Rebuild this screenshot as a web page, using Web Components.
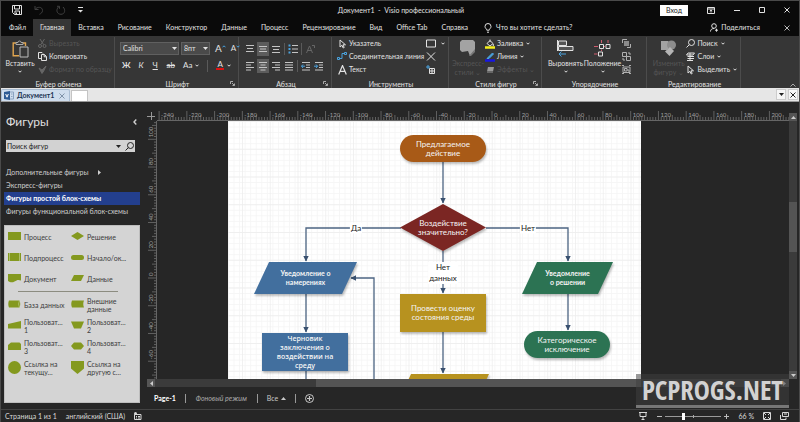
<!DOCTYPE html>
<html lang="ru">
<head>
<meta charset="utf-8">
<title>Документ1 - Visio профессиональный</title>
<style>
  html, body { margin: 0; height: 100%; background: #262626; }
  body {
    --text: #e2e2e2; --dim: #555; --line: #4c4c4c; --ribbon: #363636; --dark: #262626;
    font: 7px/9px Lato, "Open Sans", "Noto Sans", sans-serif;
    color: var(--text);
  }
</style>
</head>
<body>
<visio-window></visio-window>

<script>
/* Icons: [width, height, markup]; strokes use currentColor unless a tint is given. */
const ICONS = {
  save: [10, 10, '<path d="M.5.5h9v9h-7l-2-2zM2.500.5v3.500h5V.5M3 9.500V6h4.500v3.500M4.500 7.500v2"/>'],
  undo: [10, 10, '<path d="M1 1v3.500h3.500M1.200 4.300C3 1.500 8.500 1.500 8.500 5.500c0 2-1.500 3-3 3.800"/>'],
  redo: [10, 10, '<path d="M2.500 2C-.5 5 1 9.300 5 9.300S9.800 4.500 7 2M1 1.300h2.500v2.500"/>'],
  more: [5, 6, '<path d="M0 .5h5"/><path d="M0 3h5L2.500 5.500z" fill="currentColor" stroke="none"/>'],
  chev: [4, 3, '<path d="M.5.7L2 2.200 3.500.7"/>'],
  chevup: [6, 4, '<path d="M.5 3.500L3 1l2.500 2.500"/>'],
  caretup: [4, 3, '<path d="M.5 2.300L2 .8l1.500 1.500"/>'],
  tri: [5, 3, '<path d="M0 0h5L2.500 3z" fill="currentColor" stroke="none"/>'],
  triup: [5, 3, '<path d="M0 3h5L2.500 0z" fill="currentColor" stroke="none"/>'],
  triright: [3, 5, '<path d="M0 0v5l3-2.500z" fill="currentColor" stroke="none"/>'],
  trileft: [3, 5, '<path d="M3 0v5L0 2.500z" fill="currentColor" stroke="none"/>'],
  left: [4, 6, '<path d="M3.300.6L1 3l2.300 2.400" stroke-width="1.400"/>'],
  display: [8, 7, '<path d="M.5.5h7v6h-7zM.5 2h7M4 5.500v-2.500M2.800 4L4 2.900 5.200 4"/>'],
  min: [6, 6, '<path d="M0 3.500h6"/>'],
  max: [6, 6, '<path d="M.5.5h5v5h-5z"/>'],
  close: [6, 6, '<path d="M.5.5l5 5M5.500.5l-5 5"/>'],
  bulb: [8, 10, '<path d="M2.800 7.200C2.800 5.700 1 5.400 1 3.500a3 3 0 0 1 6 0c0 1.900-1.800 2.200-1.800 3.700zM3 9.200h2"/>'],
  person: [8, 9, '<circle cx="4" cy="3" r="2.300"/><path d="M.5 8.500C.5 6.500 2 5.500 4 5.500M5 7.200h3M6.500 5.700v3"/>'],
  paste: [17, 18, '<path d="M4 3H1.200v12.800H7" stroke="#e0a54f" stroke-width="1.400"/><path d="M11 3h2.500v3" stroke="#e0a54f" stroke-width="1.400"/><path d="M4 4.500V2.500h2a1.500 1.500 0 0 1 3 0h2v2z" stroke="#aaa"/><path d="M8 7h8v10H8z" stroke="#bbb"/>'],
  cut: [9, 9, '<path d="M2 0l3.500 5.500M6.500 0L3 5.500"/><circle cx="2" cy="7" r="1.500"/><circle cx="6.500" cy="7" r="1.500"/>'],
  copy: [9, 9, '<path d="M3 6.500H.5v-6H4l1 1M3.500 2.500h3l2 2v4h-5zM6.200 2.500v2.300h2"/>'],
  brush: [9, 9, '<path d="M1 3l3 2 4-4-2 4.500L4 8.500z" fill="currentColor"/>'],
  vtop: [10, 10, '<path d="M1 1.500h8M2 4.500h6M1 7.500h8"/>'],
  vmid: [10, 10, '<path d="M1 2.500h8M2 5h6M1 7.500h8"/>'],
  vbot: [10, 10, '<path d="M1 2.500h8M2 5.500h6M1 8.500h8"/>'],
  left4: [10, 10, '<path d="M1 1.500h8M1 4h5M1 6.500h8M1 9h5"/>'],
  center4: [10, 10, '<path d="M1 1.500h8M2.500 4h5M1 6.500h8M2.500 9h5"/>'],
  right4: [10, 10, '<path d="M1 1.500h8M4 4h5M1 6.500h8M4 9h5"/>'],
  just4: [10, 10, '<path d="M1 1.500h8M1 4h8M1 6.500h8M1 9h8"/>'],
  bullets: [10, 10, '<path d="M4 1.500h6M4 5h6M4 8.500h6"/><path d="M.5 1.500h2M.5 5h2M.5 8.500h2" stroke="#4aa3df" stroke-width="2"/>'],
  outdent: [10, 10, '<path d="M1 1.500h8M5 4h4M5 6.500h4M1 9h8"/><path d="M4 5.200H.5M2 3.500L.5 5.200 2 7" stroke="#4aa3df"/>'],
  indent: [10, 10, '<path d="M1 1.500h8M5 4h4M5 6.500h4M1 9h8"/><path d="M0 5.200h3.500M2 3.500l1.500 1.700L2 7" stroke="#4aa3df"/>'],
  rotA: [9, 10, '<path d="M.5 9L3.500 2l3 7M1.500 6.500h4M6 1.500h2.500v2.500"/>'],
  pointer: [9, 10, '<path d="M2 1v7l2-1.700 1.200 2.700 1-.5L5 5.800h2.500z"/>'],
  connector: [10, 9, '<path d="M2 6.500h3v-5h3" stroke="#4aa3df"/><path d="M.5 5.500h2v2h-2zM7.500.5h2v2h-2z" stroke="#4aa3df"/>'],
  textA: [9, 10, '<path d="M.7 9.500L4.500.5l3.800 9M2 6.300h5" stroke-width="1.200"/>'],
  rect: [10, 9, '<path d="M.5 1h9v7h-9z"/>'],
  cross: [10, 9, '<path d="M1 .5l8 8M9 .5l-8 8"/>'],
  node: [10, 10, '<path d="M3.500 3.500h5v5h-5zM3.500 6h5M6 3.500v5"/><path d="M0 2h4M2 0v4" stroke="#4aa3df"/>'],
  express: [16, 17, '<path d="M2 0h11l2 2v8l-5 6-2-5-6 1-2-2V2z" fill="#a3a3a3" stroke="none"/><path d="M9 16l6-7v3l-4 4z" fill="#777" stroke="none"/>'],
  fill: [10, 10, '<path d="M2 4.500L5 1.500l3 3-3 2.500zM5 3V.5M8.300 5v2"/><path d="M0 8.500h10" stroke="#f3ef1c" stroke-width="2.500"/>'],
  line: [10, 10, '<path d="M2 6.500L7.500 1l1 1L4 6.500z" fill="#4aa3df" stroke="#4aa3df"/><path d="M0 8.500h10" stroke="#1717e0" stroke-width="2.500"/>'],
  effect: [9, 8, '<path d="M2 1h6L7 5.500H1z" fill="#999" stroke="none"/><path d="M1 5.500h6v1.500H1z" fill="#666" stroke="none"/>'],
  align: [17, 17, '<path d="M.5 0v11"/><path d="M1.500 1h8v4.500h-8zM1.500 6.500h14.500v4h-14.500z" fill="#555"/><path d="M9 14H2M4.500 11.500L2 14l2.500 2.500" stroke="#4aa3df"/>'],
  position: [17, 17, '<path d="M4.500 12h4v4h-4zM5.500 4.500h4v4h-4zM12 4.500h4v4h-4z"/><path d="M7.500 0v3M0 6.500h4M7.500 9.500v1.500M10 6.500h1.500M0 14h3.500M14 0v3" stroke="#cf5b6d"/>'],
  front: [9, 9, '<path d="M.5 4V.5H5M8.500 5v3.500H5"/><path d="M2 2h5v5H2z" fill="#8c8c8c" stroke="none"/>'],
  back: [9, 9, '<path d="M.5.5h4v4h-4zM4.500 4.500h4v4h-4zM6 1h2v2M1 6v2h2"/>'],
  group: [9, 9, '<path d="M1 2v5.500h7V2zM2.500 3.500h2.500v2.500H2.500zM5 5h2v2"/><path d="M0 .5h2M7 .5h2M0 8.500h2M7 8.500h2"/>'],
  change: [16, 17, '<path d="M0 1h7l4 4-5 5H0z" fill="#a3a3a3" stroke="none"/><circle cx="10.500" cy="5" r="4.500" fill="#8d8d8d" stroke="none"/><path d="M9 7l4 4-4.500 5L4 11.500z" fill="#b5b5b5" stroke="none"/>'],
  find: [9, 9, '<circle cx="5.500" cy="3.500" r="3"/><path d="M3.300 5.700L.5 8.500"/>'],
  layers: [9, 9, '<path d="M2 1h6.500L7 3H.5zM1.500 4.500h6.500M1.500 6.500h6.500M1 8.500h6M4 1v7"/>'],
  launch: [5, 5, '<path d="M.5 3V.5H3M2 2l2.300 2.300M4.500 2.500v2h-2"/>'],
  visio: [10, 9, '<path d="M5 1h4.500v7H5zM7 3h1.500M7 5.500h1.500" stroke="#8ba3c0"/><path d="M0 1l6-1v9L0 8z" fill="#2c5a94" stroke="none"/><path d="M1.700 3L3 6.200 4.300 3" stroke="#fff"/>'],
  add: [9, 9, '<circle cx="4.500" cy="4.500" r="4"/><path d="M4.500 2v5M2 4.500h5" stroke-width="1.200"/>'],
  macro: [8, 8, '<path d="M.5 2.500h6.500v5H.5zM2 4.500h1M4 4.500h2M2 6h1M4 6h2"/><circle cx="1.500" cy="1.500" r="1.500" fill="currentColor" stroke="none"/>'],
  present: [8, 8, '<path d="M0 .5h8M1 .5v4h6v-4M4 4.500v3M2.500 7.500h3"/>'],
  fit: [8, 8, '<path d="M.5.5h7v7h-7zM1 1l2 2M7 1L5 3M1 7l2-2M7 7L5 5"/>'],
  windows: [9, 8, '<path d="M2.500.5h6v4h-6zM.5 3v4.500h5.500v-2M4 2h3"/>'],
  plus: [5, 5, '<path d="M0 2.500h5M2.500 0v5"/>'],
  minus: [5, 5, '<path d="M0 2.500h5"/>'],
  target: [8, 8, '<path d="M0 4.500h8M4.500 0v8"/>']
};

/* Green stencil shapes, drawn in a 13 x 13 box. */
const STENCILS = {
  process: '<path d="M0 2h13v8H0z"/>',
  decision: '<path d="M0 6l6.500-4L13 6l-6.500 4z"/>',
  sub: '<path d="M0 2h13v8H0z"/><path d="M1.500 2v8M11.500 2v8" stroke="#c9d8a0" stroke-width=".6"/>',
  terminator: '<rect y="4" width="13" height="5" rx="2.500"/>',
  document: '<path d="M0 2h13v6.500c-3-1-4-.5-6.500 1S2 10.300 0 9z"/>',
  data: '<path d="M3 3h10l-3 6H0z"/>',
  database: '<path d="M1 2.500h10.500q1.500 3.500 0 7H1q-1.500-3.500 0-7z"/><path d="M11.500 2.500q-1.800 3.500 0 7" fill="none" stroke="#c9d8a0" stroke-width=".6"/>',
  external: '<path d="M1 2.500h12q-1.500 3.500 0 7H1q-1.500-3.500 0-7z"/>',
  c1: '<path d="M0 5l13-3v7.500H0z"/>',
  c2: '<path d="M0 2.500h13l-3 7H3z"/>',
  c3: '<path d="M3 2.500h8.500L13 4v6H0V5z"/>',
  c4: '<path d="M3 2.500h7L13 6l-3 3.500H3L0 6z"/>',
  ref: '<circle cx="6.500" cy="6.500" r="6.500"/>',
  offpage: '<path d="M0 0h13v7.500L6.500 13 0 7.500z"/>'
};

const SHARED = `<style>
  * { box-sizing: border-box; }
  button, input, select { font: inherit; color: inherit; background: none; border: 0; padding: 0; margin: 0; border-radius: 0; }
  button, a { display: flex; align-items: center; white-space: nowrap; color: inherit; text-decoration: none; }
</style>`;

class View extends HTMLElement {
  connectedCallback() {
    if (this.shadowRoot) return;
    this.attachShadow({ mode: 'open' }).innerHTML = SHARED + this.view();
    this.ready?.();
  }
  at(name, fallback = '') { return this.getAttribute(name) ?? fallback; }
}

class UiIcon extends View {
  view() {
    const [w, h, body] = ICONS[this.at('name')];
    return `<style>:host { display: block; flex: none; } svg { display: block; }</style>
      <svg width="${w}" height="${h}" viewBox="0 0 ${w} ${h}" fill="none" stroke="currentColor" aria-hidden="true">${body}</svg>`;
  }
}

class TitleBar extends View {
  view() {
    return `<style>
      :host { display: grid; grid-template-columns: 1fr auto 1fr; align-items: center; height: 18px; padding: 0 9px 0 11px; font-size: 7px; }
      .side { display: flex; align-items: center; gap: 12px; }
      .end { justify-content: flex-end; gap: 19px; }
      .off { color: #404040; }
      .login { background: #fff; color: #222; height: 11px; padding: 0 6px; }
      h1 { font: inherit; margin: 0; }
    </style>
    <div class="side">
      <button aria-label="Сохранить"><ui-icon name="save"></ui-icon></button>
      <button class="off" aria-label="Отменить"><ui-icon name="undo"></ui-icon></button>
      <button class="off" aria-label="Повторить"><ui-icon name="redo"></ui-icon></button>
      <button aria-label="Настройка панели"><ui-icon name="more"></ui-icon></button>
    </div>
    <h1>Документ1 &nbsp;- &nbsp;Visio профессиональный</h1>
    <div class="side end">
      <button class="login">Вход</button>
      <button aria-label="Параметры ленты"><ui-icon name="display"></ui-icon></button>
      <button aria-label="Свернуть"><ui-icon name="min"></ui-icon></button>
      <button aria-label="Развернуть"><ui-icon name="max"></ui-icon></button>
      <button aria-label="Закрыть"><ui-icon name="close"></ui-icon></button>
    </div>`;
  }
}

class RibbonTabs extends View {
  view() {
    const tabs = ['Файл', 'Главная', 'Вставка', 'Рисование', 'Конструктор', 'Данные', 'Процесс', 'Рецензирование', 'Вид', 'Office Tab', 'Справка'];
    return `<style>
      :host { display: flex; align-items: stretch; height: 17px; padding: 0 9px 0 1px; }
      nav { display: flex; }
      nav a { padding: 0 7px; }
      .on { background: var(--ribbon); }
      .ask { margin-left: 9px; gap: 4px; }
      .share { margin-left: auto; gap: 3px; }
      .x { margin-left: 24px; color: #bbb; }
    </style>
    <nav>${tabs.map(t => `<a href="#"${t === 'Главная' ? ' class="on" aria-current="page"' : ''}>${t}</a>`).join('')}</nav>
    <button class="ask"><ui-icon name="bulb"></ui-icon>Что вы хотите сделать?</button>
    <button class="share"><ui-icon name="person"></ui-icon>Поделиться</button>
    <button class="x" aria-label="Закрыть ленту"><ui-icon name="close"></ui-icon></button>`;
  }
}

class RibbonGroup extends View {
  view() {
    return `<style>
      :host { display: flex; flex-direction: column; border-right: 1px solid var(--line); padding: 0 3px 0 5px; min-width: 0; }
      .body { display: flex; flex: 1; min-height: 0; }
      footer { display: flex; align-items: center; justify-content: center; height: 10px; position: relative; }
      button { position: absolute; right: 0; top: 2px; color: #aaa; }
    </style>
    <div class="body"><slot></slot></div>
    <footer>${this.at('label')}${this.hasAttribute('launcher') ? `<button aria-label="Параметры: ${this.at('label')}"><ui-icon name="launch"></ui-icon></button>` : ''}</footer>`;
  }
}

class RibbonStack extends View {
  view() {
    return `<style>:host { display: flex; flex-direction: column; align-items: flex-start; }</style><slot></slot>`;
  }
}

/* Small command: icon, caption passed in the slot, optional menu arrow. */
class RibbonButton extends View {
  view() {
    return `<style>
      :host { display: block; }
      button { height: 13px; gap: 2px; }
      .ico { width: 10px; display: flex; justify-content: center; }
      :host([off]) .txt { color: var(--dim); }
      :host([off]) .ico { color: #666; }
      .menu { margin-left: 1px; }
    </style>
    <button${this.hasAttribute('off') ? ' disabled' : ''}${this.hasAttribute('hint') ? ` aria-label="${this.at('hint')}"` : ''}>
      <span class="ico"><ui-icon name="${this.at('icon')}"></ui-icon></span><span class="txt"><slot></slot></span>
      ${this.hasAttribute('menu') ? '<ui-icon class="menu" name="chev"></ui-icon>' : ''}
    </button>`;
  }
}

class BigButton extends View {
  view() {
    return `<style>
      :host { display: block; }
      button { flex-direction: column; padding-top: 3px; text-align: center; width: 100%; }
      ui-icon { height: 19px; }
      .txt { white-space: pre-line; display: block; margin-bottom: 2px; }
      .menu { height: 3px; }
      :host([off]) .txt { color: var(--dim); }
    </style>
    <button${this.hasAttribute('off') ? ' disabled' : ''}>
      <ui-icon name="${this.at('icon')}"></ui-icon><span class="txt"><slot></slot></span>
      ${this.hasAttribute('menu') ? '<ui-icon class="menu" name="chev"></ui-icon>' : ''}
    </button>`;
  }
}

class FontTools extends View {
  view() {
    return `<style>
      :host { display: flex; flex-direction: column; width: 100%; padding-top: 5px; gap: 4px; }
      .row { display: flex; align-items: center; gap: 2px; height: 13px; }
      label { position: relative; display: flex; }
      select { appearance: none; height: 13px; width: 59px; background: #4a4a4a; border: 1px solid #606060; padding: 0 2px; font-size: 7px; }
      .size select { width: 29px; }
      label ui-icon { position: absolute; right: 2px; top: 5px; }
      .grow { font-size: 10px; margin-left: 3px; }
      .grow.sm { font-size: 8px; }
      .grow ui-icon { margin-bottom: 5px; color: #4aa3df; }
      .fmt { gap: 8px; padding-left: 2px; font-size: 8px; }
      .fmt button { gap: 3px; min-width: 6px; }
      .bar { width: 1px; height: 12px; background: #5a5a5a; }
      .color span { border-bottom: 2px solid #d11; line-height: 7px; padding: 0 1px; }
    </style>
    <div class="row">
      <label><select aria-label="Шрифт"><option>Calibri</option></select><ui-icon name="tri"></ui-icon></label>
      <label class="size"><select aria-label="Размер"><option>8пт</option></select><ui-icon name="tri"></ui-icon></label>
      <button class="grow">A<ui-icon name="caretup"></ui-icon></button>
      <button class="grow sm">A<ui-icon name="chev"></ui-icon></button>
    </div>
    <div class="row fmt">
      <button><b>Ж</b></button><button><i>К</i></button><button><u>Ч</u></button><button><s>ab</s></button>
      <button>Aa<ui-icon name="chev"></ui-icon></button><span class="bar"></span>
      <button class="color"><span>А</span><ui-icon name="chev"></ui-icon></button>
    </div>`;
  }
}

class ParagraphTools extends View {
  view() {
    const cell = n => n === '|' ? '<span class="bar"></span>'
      : `<button aria-label="${n}" class="${/vmid|center4/.test(n) ? 'on' : n === 'rotA' ? 'off' : ''}"><ui-icon name="${n}"></ui-icon></button>`;
    return `<style>
      :host { display: flex; flex-direction: column; padding-top: 5px; gap: 3px; color: #c4c4c4; }
      .row { display: flex; align-items: center; gap: 1px; }
      button { height: 14px; width: 12px; justify-content: center; }
      .on { background: #5c5c5c; }
      .off { color: #666; }
      .bar { width: 1px; height: 12px; background: #5a5a5a; margin: 0 1px; }
    </style>
    <div class="row">${['vtop', 'vmid', 'vbot', '|', 'bullets', '|', 'rotA'].map(cell).join('')}</div>
    <div class="row">${['left4', 'center4', 'right4', 'just4', '|', 'outdent', 'indent'].map(cell).join('')}</div>`;
  }
}

class RibbonBar extends View {
  view() {
    return `<style>
      :host { display: grid; grid-template-columns: 114px 124px 93px 117px 93px 105px 94px 1fr; height: 52px; padding: 1px 0; background: var(--ribbon); }
      .gap { margin-left: auto; }
      .wide { width: 37px; }
      .end { display: flex; justify-content: flex-end; align-items: flex-end; padding: 0 3px 2px 0; color: #aaa; }
      .arr { color: #b0b0b0; }
      .first { width: 28px; margin-right: 3px; }
    </style>
    <ribbon-group label="Буфер обмена">
      <big-button class="first" icon="paste" menu>Вставить</big-button>
      <ribbon-stack>
        <ribbon-button icon="cut" off>Вырезать</ribbon-button>
        <ribbon-button icon="copy">Копировать</ribbon-button>
        <ribbon-button icon="brush" off>Формат по образцу</ribbon-button>
      </ribbon-stack>
    </ribbon-group>
    <ribbon-group label="Шрифт" launcher><font-tools></font-tools></ribbon-group>
    <ribbon-group label="Абзац" launcher><paragraph-tools></paragraph-tools></ribbon-group>
    <ribbon-group label="Инструменты">
      <ribbon-stack>
        <ribbon-button icon="pointer">Указатель</ribbon-button>
        <ribbon-button icon="connector">Соединительная линия</ribbon-button>
        <ribbon-button icon="textA">Текст</ribbon-button>
      </ribbon-stack>
      <ribbon-stack class="gap">
        <ribbon-button icon="rect" menu hint="Прямоугольник"></ribbon-button>
        <ribbon-button icon="cross" hint="Точка соединения"></ribbon-button>
        <ribbon-button icon="node" hint="Блок текста"></ribbon-button>
      </ribbon-stack>
    </ribbon-group>
    <ribbon-group label="Стили фигур" launcher>
      <big-button class="first" icon="express" off>Экспресс-
стили ⌄</big-button>
      <ribbon-stack>
        <ribbon-button icon="fill" menu>Заливка</ribbon-button>
        <ribbon-button icon="line" menu>Линия</ribbon-button>
        <ribbon-button icon="effect" off>Эффекты ⌄</ribbon-button>
      </ribbon-stack>
    </ribbon-group>
    <ribbon-group label="Упорядочение">
      <big-button class="wide" icon="align" menu>Выровнять</big-button>
      <big-button class="wide" icon="position" menu>Положение</big-button>
      <ribbon-stack class="arr">
        <ribbon-button icon="front" hint="На передний план"></ribbon-button>
        <ribbon-button icon="back" hint="На задний план"></ribbon-button>
        <ribbon-button icon="group" hint="Группировать"></ribbon-button>
      </ribbon-stack>
    </ribbon-group>
    <ribbon-group label="Редактирование">
      <big-button class="wide" icon="change" off>Изменить
фигуру ⌄</big-button>
      <ribbon-stack>
        <ribbon-button icon="find" menu>Поиск</ribbon-button>
        <ribbon-button icon="layers" menu>Слои</ribbon-button>
        <ribbon-button icon="pointer" menu>Выделить</ribbon-button>
      </ribbon-stack>
    </ribbon-group>
    <div class="end"><button aria-label="Свернуть ленту"><ui-icon name="chevup"></ui-icon></button></div>`;
  }
}

class DocumentTabs extends View {
  view() {
    return `<style>
      :host { display: flex; align-items: stretch; height: 14px; background: #e6e6e6; color: #1c3453; border-bottom: 1px solid #9a9a9a; }
      .tab { background: #cfdded; border: 1px solid #a9bdd3; border-bottom: 0; padding: 0 4px 0 2px; gap: 3px; font-size: 7px; font-weight: 700; border-radius: 2px 2px 0 0; margin-top: 1px; }
      .tab ui-icon.x { color: #7f92a8; margin-left: 2px; }
      .new { width: 17px; background: #fff; border: 1px solid #c4c4c4; border-bottom: 0; margin: 2px 0 0 1px; }
      .end { margin-left: auto; display: flex; gap: 2px; padding: 1px 1px; }
      .end button { width: 10px; justify-content: center; background: #f6f6f6; border: 1px solid #ccc; color: #222; }
    </style>
    <button class="tab"><ui-icon name="visio"></ui-icon>Документ1<ui-icon class="x" name="close"></ui-icon></button>
    <button class="new" aria-label="Новая вкладка"></button>
    <div class="end">
      <button aria-label="Список вкладок"><ui-icon name="tri"></ui-icon></button>
      <button aria-label="Закрыть вкладку"><ui-icon name="close"></ui-icon></button>
    </div>`;
  }
}

class StencilItem extends View {
  view() {
    return `<style>
      :host { display: flex; align-items: center; gap: 3px; height: 21px; line-height: 8px; color: #3c3c3c; }
      svg { flex: none; display: block; }
      span { white-space: pre; }
    </style>
    <svg width="13" height="13" viewBox="0 0 13 13" fill="#84991f" aria-hidden="true">${STENCILS[this.at('shape')]}</svg><span><slot></slot></span>`;
  }
}

class ShapesPane extends View {
  view() {
    const item = ([s, t]) => `<stencil-item shape="${s}">${t}</stencil-item>`;
    const top = [['process', 'Процесс'], ['decision', 'Решение'], ['sub', 'Подпроцесс'], ['terminator', 'Начало/ок...'], ['document', 'Документ'], ['data', 'Данные']];
    const rest = [['database', 'База данных'], ['external', 'Внешние\nданные'], ['c1', 'Пользоват...\n1'], ['c2', 'Пользоват...\n2'], ['c3', 'Пользоват...\n3'], ['c4', 'Пользоват...\n4'], ['ref', 'Ссылка на\nтекущу...'], ['offpage', 'Ссылка на\nдругую с...']];
    return `<style>
      :host { display: flex; flex-direction: column; padding: 11px 5px 6px 3px; color: #cfcfcf; }
      header { display: flex; justify-content: space-between; align-items: center; padding: 0 3px 0 2px; height: 18px; }
      h2 { font-size: 12px; line-height: 18px; font-weight: 400; margin: 0; color: #e0e0e0; }
      .search { display: flex; align-items: center; gap: 4px; margin: 9px 5px 14px 2px; height: 12px; background: #d2d2d2; color: #222; padding: 0 1px; }
      input { flex: 1; min-width: 0; height: 12px; font-size: 7px; }
      ul { list-style: none; margin: 0; padding: 0 0 7px; }
      li a { height: 13px; padding-left: 2px; gap: 9px; }
      .on { background: #233f8e; color: #fff; font-weight: 700; }
      .panel { flex: 1; background: #d4d4d4; border: 1px solid #bdbdbd; padding: 0 3px; }
      .grid { display: grid; grid-template-columns: 63px 1fr; }
      hr { border: 0; border-top: 1px solid #8c8c80; margin: 2px 18px 2px 10px; }
    </style>
    <header><h2>Фигуры</h2><button aria-label="Свернуть область"><ui-icon name="left"></ui-icon></button></header>
    <div class="search"><input type="text" value="Поиск фигур" aria-label="Поиск фигур"><ui-icon name="tri"></ui-icon><button aria-label="Найти"><ui-icon name="find"></ui-icon></button></div>
    <ul>
      <li><a href="#">Дополнительные фигуры <ui-icon name="triright"></ui-icon></a></li>
      <li><a href="#">Экспресс-фигуры</a></li>
      <li><a href="#" class="on">Фигуры простой блок-схемы</a></li>
      <li><a href="#">Фигуры функциональной блок-схемы</a></li>
    </ul>
    <div class="panel"><div class="grid">${top.map(item).join('')}</div><hr><div class="grid">${rest.map(item).join('')}</div></div>`;
  }
}

/* Ruler: labelled every 20 units; "zero" is the position of unit 0 along the axis. */
class RulerScale extends View {
  view() {
    return `<style>
      :host { display: block; overflow: hidden; min-width: 0; min-height: 0; position: relative; }
      svg { position: absolute; inset: 0; width: 100%; height: 100%; }
      text { font-size: 6px; fill: #a0a0a0; }
    </style><svg aria-hidden="true"></svg>`;
  }
  ready() { new ResizeObserver(() => this.draw()).observe(this); this.draw(); }
  draw() {
    const vert = this.hasAttribute('vertical'), zero = +this.at('zero'), unit = 1.387;
    const end = vert ? this.clientHeight : this.clientWidth;
    let ticks = '', labels = '';
    for (let u = -2000; u <= 2000; u += 2) {
      const p = zero + (vert ? -u : u) * unit;
      if (p < 0 || p > end) continue;
      const major = u % 20 === 0, len = major ? 9 : u % 10 === 0 ? 5 : 3;
      ticks += vert ? `M${10 - len} ${p}H10` : `M${p} ${10 - len}V10`;
      if (!major) continue;
      if (vert && p > 14) labels += `<text transform="translate(6 ${p - 2}) rotate(-90)">${u}</text>`;
      if (!vert && p < end - 14) labels += `<text x="${p + 2}" y="7">${u}</text>`;
    }
    this.shadowRoot.querySelector('svg').innerHTML =
      `<path d="${ticks}" stroke="#8a8a8a" stroke-width=".6"/><path d="${vert ? `M9.500 0V${end}` : `M0 10.500H${end}`}" stroke="#666"/>${labels}`;
  }
}

class ScrollTrack extends View {
  view() {
    const v = this.hasAttribute('vertical');
    return `<style>
      :host { display: flex; flex-direction: ${v ? 'column' : 'row'}; background: #3b3b3b; }
      button { width: 8px; height: 8px; flex: none; background: #555; color: #ccc; justify-content: center; }
      .space { flex: ${this.at('before')}; }
      .thumb { flex: ${this.at('size')}; background: #545454; }
      .rest { flex: ${this.at('after')}; }
    </style>
    <button aria-label="Назад"><ui-icon name="${v ? 'triup' : 'trileft'}"></ui-icon></button>
    <div class="space"></div><div class="thumb"></div><div class="rest"></div>
    <button aria-label="Вперёд"><ui-icon name="${v ? 'tri' : 'triright'}"></ui-icon></button>`;
  }
}

/* Flowchart block at x, y on the sheet. kind: pill, box, diamond or slant. */
class FlowNode extends View {
  view() {
    const w = +this.at('w'), h = +this.at('h'), kind = this.at('kind');
    const s = {
      pill: `<rect width="${w}" height="${h}" rx="${h / 2}"/>`,
      box: `<rect width="${w}" height="${h}"/>`,
      diamond: `<path d="M0 ${h / 2}L${w / 2} 0 ${w} ${h / 2} ${w / 2} ${h}z"/>`,
      slant: `<path d="M15 0H${w}L${w - 15} ${h}H0z"/>`
    }[kind];
    return `<style>
      :host { position: absolute; left: ${this.at('x')}px; top: ${this.at('y')}px; width: ${w}px; height: ${h}px;
        display: flex; align-items: center; justify-content: center; text-align: center; color: #f4f4f4; font-size: 8px; line-height: 9px; }
      :host([wide]) { font-family: "Open Sans", "Noto Sans", sans-serif; font-size: 7px; font-weight: 600; }
      :host([small]) { font-size: 7px; font-weight: 700; }
      svg { position: absolute; inset: 0; overflow: visible; filter: drop-shadow(1px 2px 1px #0004); }
      span { position: relative; white-space: pre-line; }
    </style><svg width="${w}" height="${h}" fill="${this.at('fill')}" aria-hidden="true">${s}</svg><span><slot></slot></span>`;
  }
}

class FlowLabel extends View {
  view() {
    return `<style>:host { position: absolute; left: ${this.at('x')}px; top: ${this.at('y')}px; transform: translate(-50%, -50%);
      background: #fff; color: #222; font-size: 8px; line-height: 11px; text-align: center; white-space: pre-line; padding: 0 1px; }</style><slot></slot>`;
  }
}

class DrawingSheet extends View {
  view() {
    const paths = ['M215 41V82', 'M173 107H78V140', 'M258 107H340V140', 'M215 130V172', 'M78 173V211', 'M146 400V157H123', 'M215 211V252', 'M340 173V209'];
    return `<style>
      :host { display: block; position: relative; overflow: hidden; background: #fff; }
      svg.links { position: absolute; inset: 0; width: 100%; height: 100%; }
    </style>
    <svg class="links" fill="none" aria-hidden="true">
      <defs>
        <pattern id="g" width="5.550" height="5.550" patternUnits="userSpaceOnUse"><path d="M.5 0V6M0 .5H6" stroke="#f4f4f4" stroke-width=".8"/></pattern>
        <pattern id="m" width="27.750" height="27.750" x="14" patternUnits="userSpaceOnUse"><path d="M.5 0V28M0 .5H28" stroke="#ededed" stroke-width=".8"/></pattern>
        <marker id="a" markerUnits="userSpaceOnUse" markerWidth="6" markerHeight="6" refX="5" refY="3" orient="auto"><path d="M0 .3L5.500 3 0 5.700z" fill="#39506f"/></marker>
      </defs>
      <rect width="100%" height="100%" fill="url(#g)"/><rect width="100%" height="100%" fill="url(#m)"/>
      <g stroke="#4c6482" stroke-width="1.300">${paths.map(d => `<path d="${d}" marker-end="url(#a)"/>`).join('')}<path d="M78 250V400"/></g>
    </svg>
    <flow-label x="128" y="107">Да</flow-label>
    <flow-label x="300" y="107">Нет</flow-label>
    <flow-label x="215" y="152">Нет
данных</flow-label>
    <flow-node kind="pill" x="172" y="14" w="86" h="27" fill="#a85a17">Предлагаемое
действие</flow-node>
    <flow-node kind="diamond" x="172" y="83" w="86" h="47" fill="#7b2623">Воздействие
значительно?</flow-node>
    <flow-node kind="slant" small x="26" y="141" w="103" h="32" fill="#426f9e">Уведомление о
намерениях</flow-node>
    <flow-node kind="box" wide x="34" y="212" w="86" h="38" fill="#426f9e">Черновик
заключения о
воздействии на
среду</flow-node>
    <flow-node kind="box" x="172" y="173" w="86" h="38" fill="#b7921f">Провести оценку
состояния среды</flow-node>
    <flow-node kind="slant" x="168" y="253" w="93" h="32" fill="#b7921f"></flow-node>
    <flow-node kind="slant" small x="294" y="141" w="91" h="32" fill="#2c7353">Уведомление
о решении</flow-node>
    <flow-node kind="pill" x="296" y="210" w="86" h="27" fill="#2c7353">Категорическое
исключение</flow-node>`;
  }
}

class DrawingArea extends View {
  view() {
    return `<style>
      :host { display: grid; grid-template-columns: 10px 1fr 8px; grid-template-rows: 11px 1fr 8px; padding: 8px 2px 0 0; min-height: 0; }
      .corner { color: #999; display: flex; align-items: center; }
      .view { position: relative; overflow: hidden; }
      drawing-sheet { position: absolute; left: 71px; top: 0; bottom: 0; width: 413px; }
      .h { grid-column: 1 / 3; }
      .v { grid-column: 3; grid-row: 1 / 3; margin-top: 3px; }
    </style>
    <div class="corner"><ui-icon name="target"></ui-icon></div>
    <ruler-scale zero="335"></ruler-scale>
    <ruler-scale class="v-ruler" style="grid-area: 2 / 1" vertical zero="157"></ruler-scale>
    <div class="view"><drawing-sheet></drawing-sheet></div>
    <scroll-track class="v" vertical before="80" size="50" after="118"></scroll-track>
    <scroll-track class="h" before="161" size="324" after="140"></scroll-track>`;
  }
}

class PageTabs extends View {
  view() {
    return `<style>
      :host { display: flex; align-items: center; gap: 9px; height: 22px; padding-left: 7px; color: #c8c8c8; }
      .on { color: #fff; font-weight: 700; }
      .bar { width: 1px; height: 9px; background: #999; }
      a i { padding: 0 1px; color: #aaa; }
      button { gap: 3px; }
    </style>
    <a href="#" class="on">Page-1</a><span class="bar"></span><a href="#"><i>Фоновый режим</i></a><span class="bar"></span>
    <button>Все <ui-icon name="triup"></ui-icon></button><span class="bar"></span>
    <button aria-label="Добавить страницу"><ui-icon name="add"></ui-icon></button>`;
  }
}

class StatusBar extends View {
  view() {
    return `<style>
      :host { display: flex; align-items: center; height: 13px; padding: 0 10px 0 4px; border-top: 1px solid #424242; gap: 9px; color: #d8d8d8; }
      .zoom { display: flex; align-items: center; gap: 3px; margin-left: 1px; color: #bbb; }
      .end { margin-left: auto; }
      input { appearance: none; width: 56px; height: 8px; background: linear-gradient(#aaa, #aaa) center / 1px 3px no-repeat, linear-gradient(#999, #999) center / 100% 1px no-repeat; }
      input::-webkit-slider-thumb { appearance: none; width: 3px; height: 7px; background: #fff; }
    </style>
    <span>Страница 1 из 1</span><span>английский (США)</span><button aria-label="Запись макроса"><ui-icon name="macro"></ui-icon></button>
    <button class="end" aria-label="Режим презентации"><ui-icon name="present"></ui-icon></button>
    <div class="zoom"><button aria-label="Уменьшить"><ui-icon name="minus"></ui-icon></button>
      <input type="range" min="0" max="100" value="32" aria-label="Масштаб">
      <button aria-label="Увеличить"><ui-icon name="plus"></ui-icon></button></div>
    <span>66 %</span>
    <button aria-label="По размеру окна"><ui-icon name="fit"></ui-icon></button>
    <button aria-label="Окна"><ui-icon name="windows"></ui-icon></button>`;
  }
}

class WaterMark extends View {
  view() {
    return `<style>
      :host { position: absolute; right: 10px; bottom: 14px; height: 34px; width: 153px; display: flex; align-items: center; justify-content: center;
        background: #3f3f3f88; border-bottom: 3px solid #777; color: #d2d2d2; font: 700 27px/30px "Open Sans Condensed", "Open Sans", sans-serif; box-sizing: border-box; }
    </style><slot></slot>`;
  }
}

class VisioWindow extends View {
  view() {
    return `<style>
      :host { display: flex; flex-direction: column; height: 100vh; border: 1px solid #4a4a4a; border-bottom: 0; box-sizing: border-box; background: var(--dark); position: relative; overflow: hidden; }
      .top { background: #0a0a0a; }
      main { flex: 1; min-height: 0; display: grid; grid-template-columns: 144px 1fr; }
      .work { display: flex; flex-direction: column; min-width: 0; min-height: 0; padding-left: 2px; }
      drawing-area { flex: 1; }
    </style>
    <div class="top"><title-bar></title-bar><ribbon-tabs></ribbon-tabs></div>
    <ribbon-bar></ribbon-bar>
    <document-tabs></document-tabs>
    <main><shapes-pane></shapes-pane><div class="work"><drawing-area></drawing-area><page-tabs></page-tabs></div></main>
    <status-bar></status-bar>
    <water-mark>PCPROGS.NET</water-mark>`;
  }
}

for (const [tag, cls] of Object.entries({
  'ui-icon': UiIcon, 'title-bar': TitleBar, 'ribbon-tabs': RibbonTabs, 'ribbon-group': RibbonGroup, 'ribbon-stack': RibbonStack,
  'ribbon-button': RibbonButton, 'big-button': BigButton, 'font-tools': FontTools, 'paragraph-tools': ParagraphTools, 'ribbon-bar': RibbonBar,
  'document-tabs': DocumentTabs, 'stencil-item': StencilItem, 'shapes-pane': ShapesPane, 'ruler-scale': RulerScale, 'scroll-track': ScrollTrack,
  'flow-node': FlowNode, 'flow-label': FlowLabel, 'drawing-sheet': DrawingSheet, 'drawing-area': DrawingArea, 'page-tabs': PageTabs,
  'status-bar': StatusBar, 'water-mark': WaterMark, 'visio-window': VisioWindow
})) customElements.define(tag, cls);
</script>
</body>
</html>
